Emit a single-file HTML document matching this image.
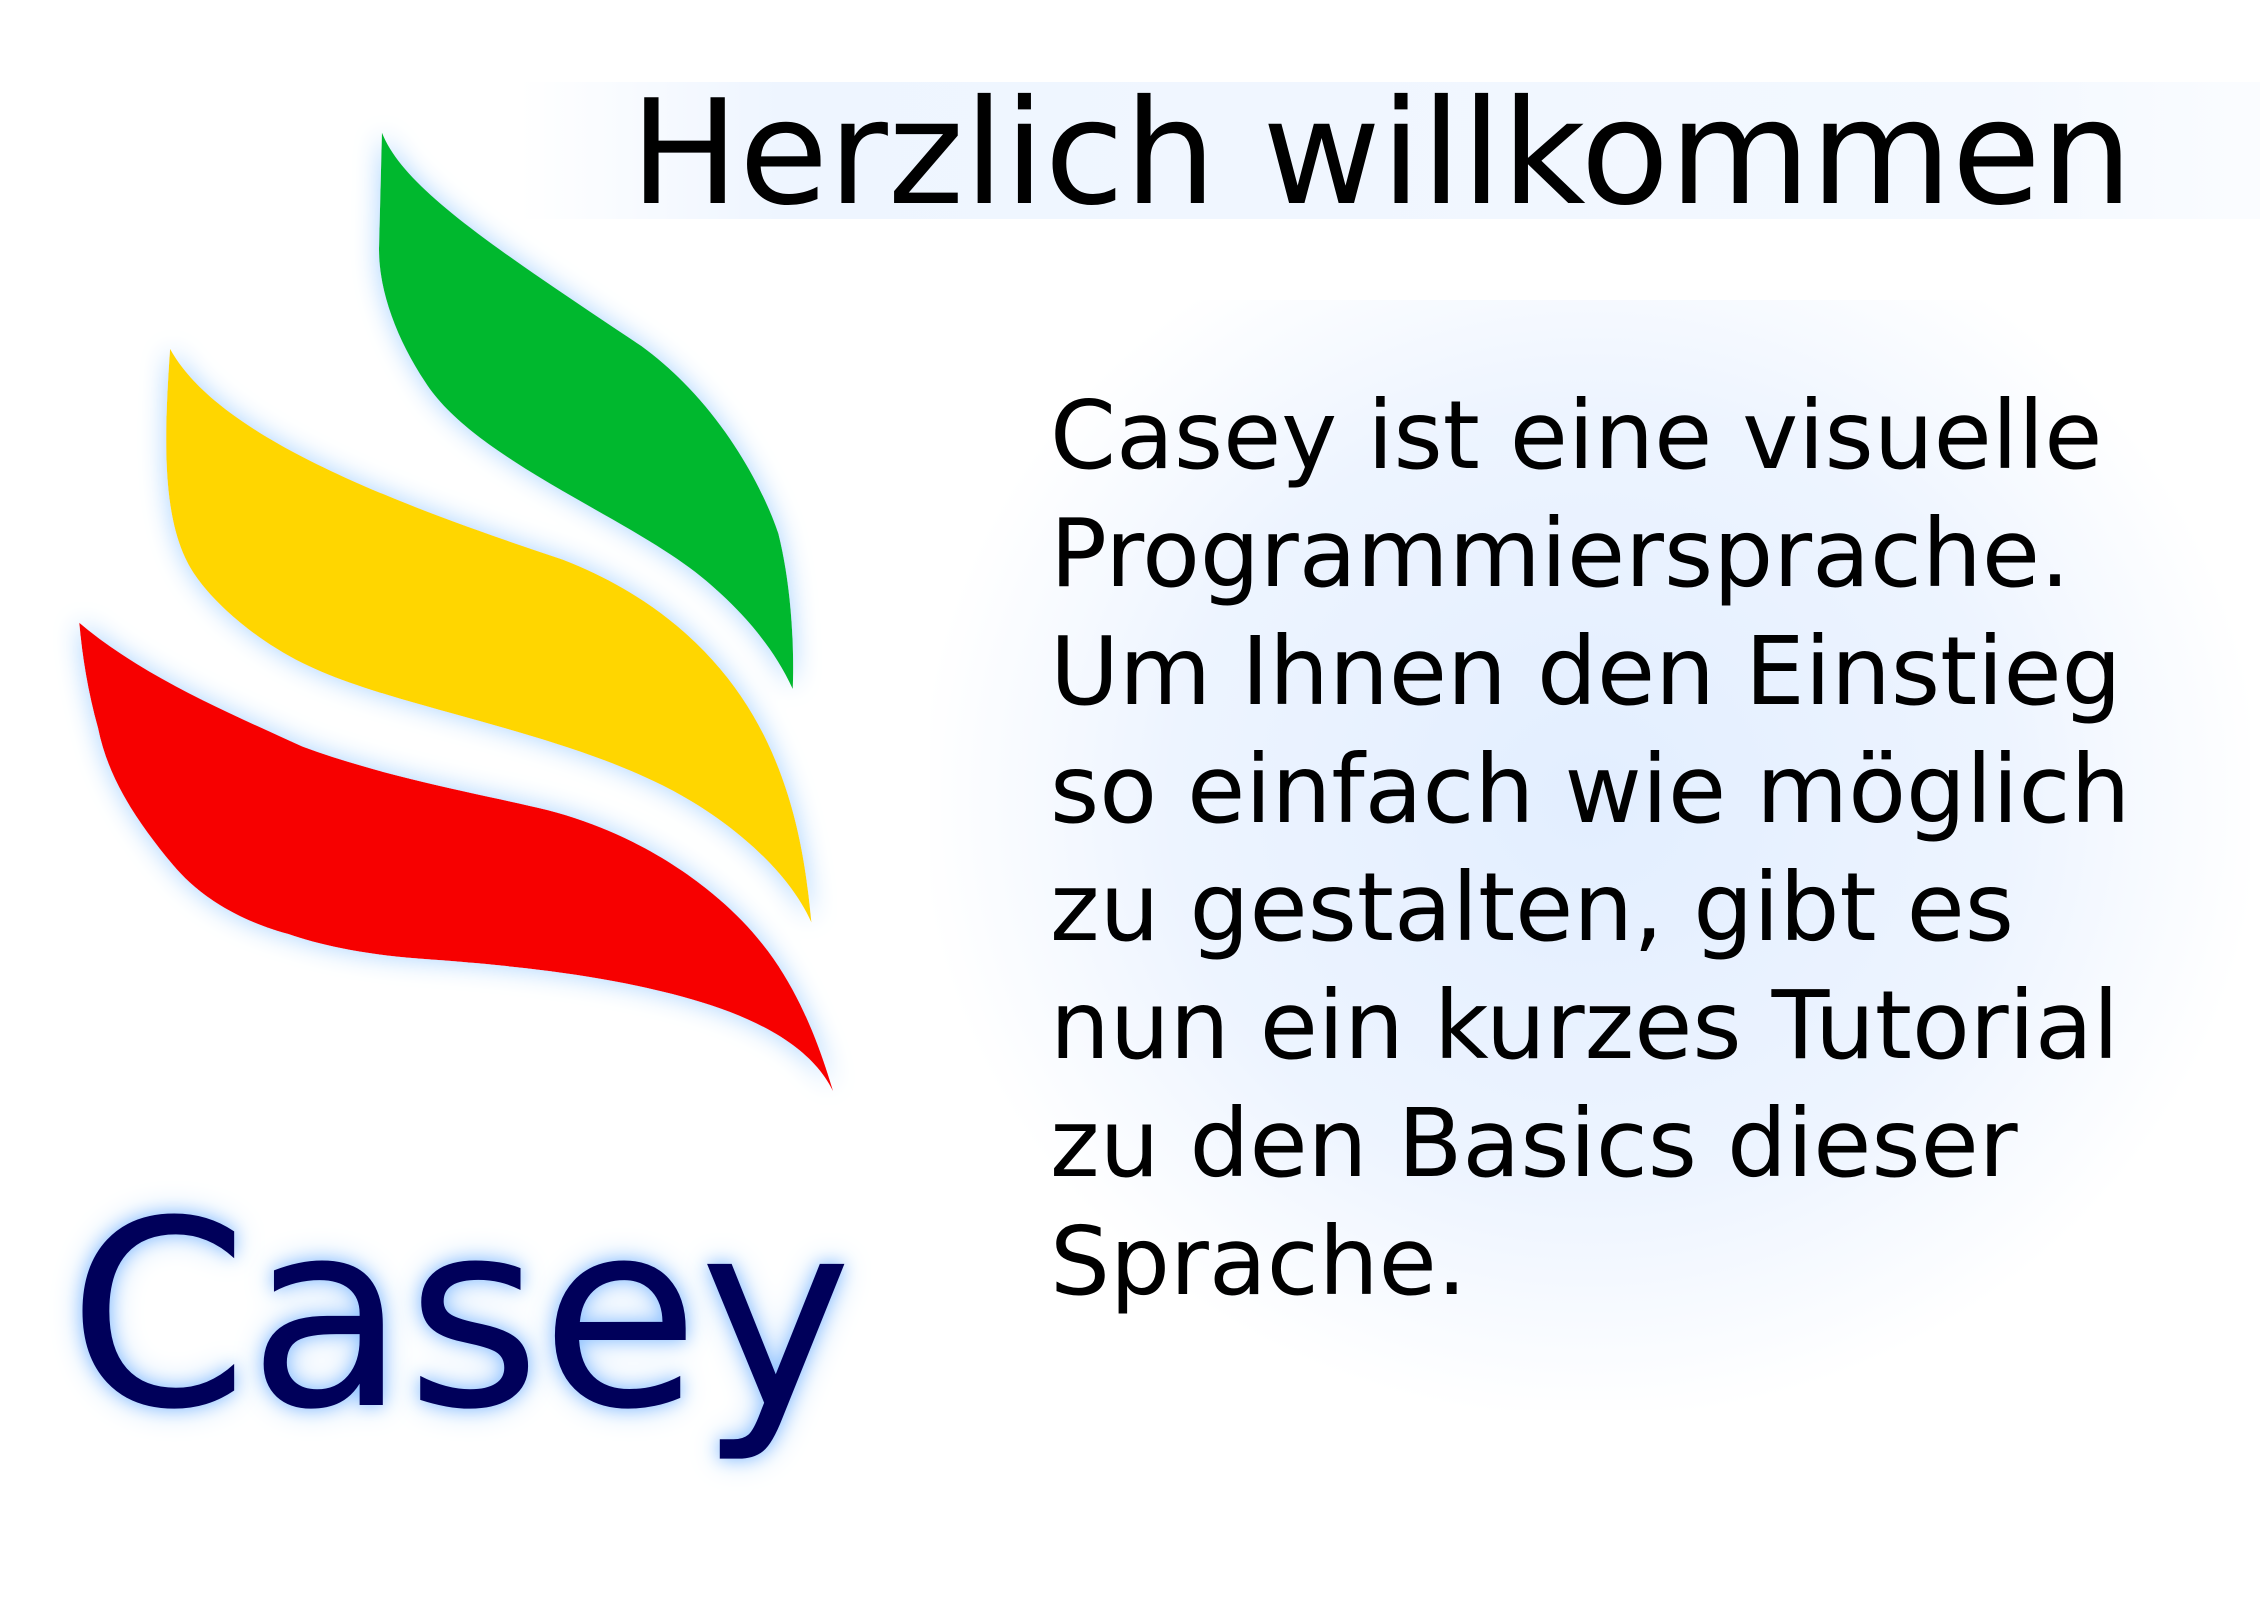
<!DOCTYPE html>
<html><head><meta charset="utf-8"><style>
html,body{margin:0;padding:0;background:#fff;}
body{width:2260px;height:1613px;position:relative;overflow:hidden;font-family:"DejaVu Sans","Liberation Sans",sans-serif;}
.tbg{position:absolute;left:519px;top:82px;width:1741px;height:137px;background:linear-gradient(90deg,rgba(235,244,255,0) 0%,#eef5ff 15%,#f3f8ff 85%,rgba(240,246,255,0.3) 100%);}
.bbg{position:absolute;left:930px;top:300px;width:1320px;height:1110px;background:radial-gradient(ellipse at 50% 45%,#e2eeff 0%,#edf4ff 45%,rgba(255,255,255,0) 72%);}
.title{position:absolute;left:630px;top:59px;font-size:145px;line-height:190px;color:#000;white-space:nowrap;}
.body{position:absolute;left:1050px;top:377px;font-size:94.5px;line-height:118px;color:#000;white-space:nowrap;}
.casey{position:absolute;left:68px;top:1146px;font-size:258px;line-height:340px;color:#00005a;text-shadow:0 0 16px #8cc0ff,0 0 32px #b8d8ff;white-space:nowrap;}
svg{position:absolute;left:0;top:0;}
</style></head><body>
<div class="tbg"></div>
<div class="bbg"></div>
<svg width="2260" height="1613" viewBox="0 0 1568 1119">
<defs><filter id="g" x="-20%" y="-20%" width="140%" height="140%"><feGaussianBlur in="SourceAlpha" stdDeviation="9"/><feColorMatrix type="matrix" values="0 0 0 0 0.5 0 0 0 0 0.72 0 0 0 0 1 0 0 0 1.3 0"/><feMerge><feMergeNode/><feMergeNode in="SourceGraphic"/></feMerge></filter></defs>
<g filter="url(#g)">
<path fill="#02b82f" d="M265,92 C280,130 340,170 445,240 C500,280 530,340 540,370 C550,410 551,455 550,478 C535,445 510,420 490,403 C440,360 330,320 295,265 C275,235 262,200 263,170 Z"/>
<path fill="#ffd600" d="M118,242 C150,300 260,345 390,388 C460,415 505,460 530,510 C555,560 560,610 563,640 C545,600 500,565 460,545 C380,505 270,490 210,460 C170,440 140,410 130,390 C112,355 114,300 118,242 Z"/>
<path fill="#f70000" d="M55,432 C100,470 160,495 210,518 C270,540 330,550 380,562 C450,580 500,620 525,650 C555,685 570,730 578,757 C560,720 510,700 460,688 C400,673 330,668 290,665 C250,662 220,655 200,648 C160,637 135,618 120,600 C95,570 75,540 68,505 C61,480 57,455 55,432 Z"/>
</g>
</svg>
<div class="title">Herzlich willkommen</div>
<div class="body">Casey ist eine visuelle<br>Programmiersprache.<br>Um Ihnen den Einstieg<br>so einfach wie möglich<br>zu gestalten, gibt es<br>nun ein kurzes Tutorial<br>zu den Basics dieser<br>Sprache.</div>
<div class="casey">Casey</div>
</body></html>
